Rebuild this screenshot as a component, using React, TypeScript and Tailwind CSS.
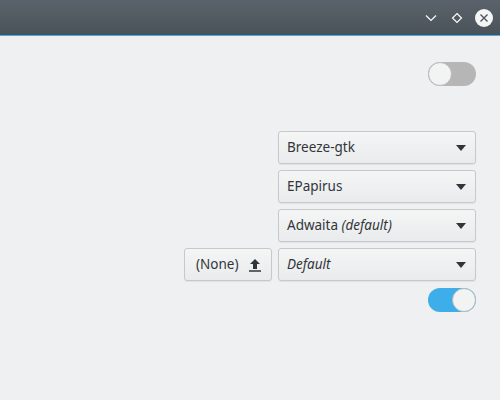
import type { ReactNode } from 'react';

function Caret() {
  return (
    <svg width="10" height="6" viewBox="0 0 10 6" className="shrink-0">
      <path d="M0 0h10L5 6z" fill="#31363b" />
    </svg>
  );
}

function Combo({ children }: { children: ReactNode }) {
  return (
    <div className="flex h-[33px] w-[198px] items-center justify-between rounded-[3px] border border-[#c6c8c9] bg-gradient-to-b from-[#f4f5f5] to-[#eaebec] pl-[8px] pr-[9px] text-[13.5px] text-[#31363b] shadow-[0_1px_1px_rgba(0,0,0,0.06)]">
      <span>{children}</span>
      <Caret />
    </div>
  );
}

function Toggle({ on }: { on: boolean }) {
  return (
    <div
      className={`flex h-[24px] w-[48px] items-center rounded-full ${
        on ? 'justify-end bg-[#3daee9]' : 'justify-start bg-[#b6b6b6]'
      }`}
    >
      <div className="h-[24px] w-[24px] rounded-full border border-[#b8babb] bg-[#f2f3f3]" />
    </div>
  );
}

export default function App() {
  return (
    <div
      className="flex h-[400px] w-[500px] flex-col bg-[#eff0f1]"
      style={{ fontFamily: '"Noto Sans", "DejaVu Sans", sans-serif' }}
    >
      {/* title bar */}
      <div className="flex h-[36px] items-center justify-end border-b border-[#3daee9] bg-gradient-to-b from-[#5a636b] to-[#4a5259] pr-[7px]">
        <svg width="14" height="14" viewBox="0 0 14 14" className="mr-[12px]">
          <path d="M2 4.5l5 5 5-5" fill="none" stroke="#fcfcfc" strokeWidth="1.2" />
        </svg>
        <svg width="14" height="14" viewBox="0 0 14 14" className="mr-[11px]">
          <path d="M7 2.5L11.5 7 7 11.5 2.5 7z" fill="none" stroke="#fcfcfc" strokeWidth="1.2" />
        </svg>
        <svg width="18" height="18" viewBox="0 0 18 18">
          <circle cx="9" cy="9" r="9" fill="#f4f5f5" />
          <path d="M5.5 5.5l7 7M12.5 5.5l-7 7" stroke="#4d555c" strokeWidth="1.4" />
        </svg>
      </div>

      <div className="flex flex-col items-end pr-[24px] pt-[26px]">
        <Toggle on={false} />

        <div className="mt-[45px] flex flex-col items-end gap-[6px]">
          <Combo>Breeze-gtk</Combo>
          <Combo>EPapirus</Combo>
          <Combo>
            Adwaita <i>(default)</i>
          </Combo>
          <div className="flex gap-[6px]">
            <div className="flex h-[33px] w-[88px] items-center justify-between rounded-[3px] border border-[#c6c8c9] bg-gradient-to-b from-[#f4f5f5] to-[#eaebec] pl-[11px] pr-[10px] text-[13.5px] text-[#31363b] shadow-[0_1px_1px_rgba(0,0,0,0.06)]">
              <span>(None)</span>
              <svg width="12" height="14" viewBox="0 0 12 14">
                <path d="M6 1L11 6H8v5H4V6H1z" fill="#31363b" />
                <path d="M0 13h12" stroke="#31363b" strokeWidth="1.5" />
              </svg>
            </div>
            <Combo>
              <i>Default</i>
            </Combo>
          </div>
        </div>

        <div className="mt-[7px]">
          <Toggle on={true} />
        </div>
      </div>
    </div>
  );
}
